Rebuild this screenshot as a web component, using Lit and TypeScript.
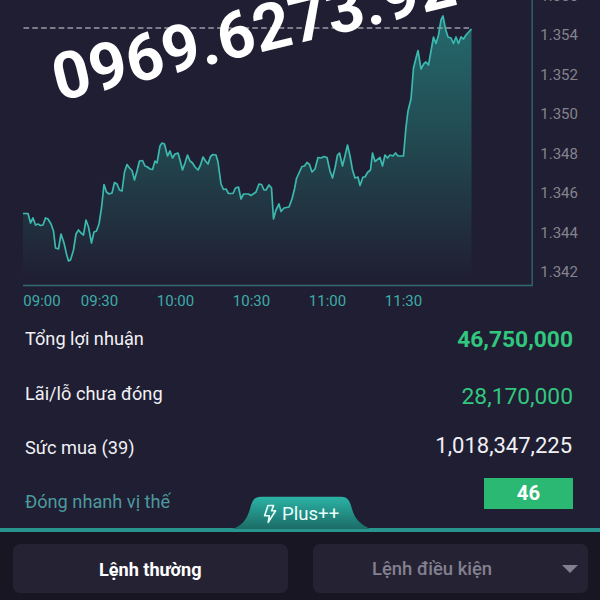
import { LitElement, html, css } from 'lit';
import { customElement, property } from 'lit/decorators.js';

// plot coordinates, origin at the top left of the plot area
const points: number[][] = [
  [0, 213.5], [5, 213.5], [7.5, 223], [10, 218], [12.5, 225], [15, 224], [17.5, 225.5], [20, 225],
  [22.5, 218], [25, 219], [28, 224], [30.5, 231], [32.5, 248], [35.5, 249], [38, 234], [41, 243],
  [43.5, 254], [45.5, 261], [47.5, 260], [50.5, 250], [53, 234], [55.5, 230], [58, 233], [60.5, 235],
  [63, 220], [65.5, 227], [68.5, 243], [71, 232], [73.5, 231], [76, 224], [78.5, 208], [81, 184.5],
  [83.5, 192], [86, 194], [89, 193], [91.5, 182.5], [94, 184], [96.5, 190], [99, 191], [101.5, 172],
  [104, 164.5], [106.5, 168], [109, 170.5], [111.5, 180], [114, 171], [116.5, 161], [119.5, 160.5],
  [122, 166], [124.5, 167], [127, 169], [129.5, 169.5], [132, 161], [134, 163], [137, 146], [139, 143],
  [141.5, 144], [144.5, 156], [147, 151], [149.5, 158], [152, 154], [155, 153], [157, 160], [159.5, 170],
  [162, 163], [164.5, 155], [167, 161], [169.5, 163], [172, 167], [175, 170], [177.5, 165], [180, 157],
  [182.5, 161], [185, 164], [187.5, 156.5], [190, 154.5], [193, 155], [195, 162], [198, 184], [200.5, 189.5],
  [203, 189], [205.5, 193.5], [210, 193.5], [212.5, 188], [215.5, 187], [218, 199], [220.5, 194],
  [225.5, 194], [228, 195.5], [233, 192], [236, 184], [238.5, 184.5], [241, 190], [243, 190], [246, 185],
  [248.5, 188], [250.5, 219], [253, 210], [256, 204], [258, 211.5], [261, 208], [266, 207], [269, 199],
  [271.5, 189], [273.5, 178.5], [276, 173], [279, 166.5], [281.5, 166], [284, 162.5], [286.5, 164.5],
  [289, 172], [292, 169], [295, 157.5], [298, 158], [301, 156.5], [304, 157.5], [307, 171], [309.5, 178],
  [312, 168], [314.5, 155], [316.5, 153], [319.5, 166], [322, 156], [324.5, 145], [327, 156],
  [329.5, 170], [332, 178], [335, 177], [337, 185.5], [340, 177], [342, 177], [344.5, 172.5], [347.5, 170],
  [349.5, 153], [352, 161.5], [357, 157.5], [359.5, 166], [362, 155], [364.5, 158], [367, 155],
  [370, 156], [372.5, 153], [375, 156], [380.5, 156], [383, 127], [385, 111], [388, 99], [390.5, 68],
  [393, 58], [395, 50.5], [398, 69], [401, 63.5], [403, 62], [405.5, 65], [408, 51], [410.5, 37],
  [413, 43.5], [415.5, 35], [418, 20], [420, 16], [422.5, 29], [425, 37], [428, 38], [430.5, 43.5],
  [433, 37], [435.5, 43.5], [438, 37], [440.5, 39], [443, 35], [448.5, 29],
];

@customElement('price-chart')
export class PriceChart extends LitElement {
  static styles = css`
    :host {
      display: block;
      height: 311px;
      overflow: hidden;
    }

    .plot-row {
      display: flex;
      height: 286px;
      padding-left: 23.3px;
    }

    .plot {
      display: block;
      flex: none;
      width: 510px;
      height: 287px;
      margin-right: 7px;
    }

    .prices {
      margin-top: -23px;
      color: #85838e;
      font-size: 15px;
    }

    .price {
      height: 39.45px;
      line-height: 39.45px;
    }

    .times {
      display: flex;
      padding: 5px 0 0 23.3px;
      color: #3cada9;
      font-size: 15px;
      line-height: 20px;
    }

    .time {
      width: 76px;
    }

    .time:first-child {
      width: 57.5px;
    }
  `;

  render() {
    const prices = ['1.356', '1.354', '1.352', '1.350', '1.348', '1.346', '1.344', '1.342'];
    const times = ['09:00', '09:30', '10:00', '10:30', '11:00', '11:30'];
    const line = 'M' + points.map(p => p.join(' ')).join('L');

    return html`
      <div class="plot-row">
        <svg class="plot" viewBox="0 0 510 287">
          <defs>
            <linearGradient id="fill" gradientUnits="userSpaceOnUse" x1="0" y1="16" x2="0" y2="280">
              <stop offset="0" stop-color="#246a6e"></stop>
              <stop offset="0.5" stop-color="#22474f"></stop>
              <stop offset="1" stop-color="#201e32"></stop>
            </linearGradient>
          </defs>
          <path d="${line}V285H0Z" fill="url(#fill)"></path>
          <path d="M0.5 28H448" stroke="#9c9ba6" stroke-width="1.3" stroke-dasharray="5.6 3.2"></path>
          <path d="${line}" fill="none" stroke="#3bb9ae" stroke-width="1.7" stroke-linejoin="round"></path>
          <path d="M0 285.5H509.2V0" fill="none" stroke="#2e6b73" stroke-width="1.3"></path>
        </svg>
        <div class="prices">
          ${prices.map(p => html`<div class="price">${p}</div>`)}
        </div>
      </div>
      <div class="times">
        ${times.map(t => html`<div class="time">${t}</div>`)}
      </div>
    `;
  }
}

@customElement('summary-row')
export class SummaryRow extends LitElement {
  @property() label = '';
  @property({ reflect: true }) kind = '';

  static styles = css`
    :host {
      display: flex;
      justify-content: space-between;
      align-items: center;
      height: 54.4px;
      padding: 0 27px 0 25px;
      color: #f1f1f5;
      font-size: 18.2px;
    }

    .value {
      font-size: 22px;
    }

    :host([kind='total']) .value {
      margin-top: 2px;
      color: #31c77f;
      font-size: 22.8px;
      font-weight: 700;
    }

    :host([kind='open']) .label {
      margin-top: 1px;
    }

    :host([kind='open']) .value {
      margin-top: 8px;
      color: #31c77f;
      font-size: 22.8px;
    }

    :host([kind='power']) .label {
      margin-top: 1px;
    }

    :host([kind='power']) .value {
      margin: 0 1px 3px 0;
    }

    :host([kind='close']) .label {
      color: #4c9a9f;
    }

    :host([kind='close']) .value {
      width: 89px;
      margin-bottom: 16px;
      background: #2bb872;
      color: #fff;
      font-size: 20.3px;
      font-weight: 700;
      line-height: 31px;
      text-align: center;
    }
  `;

  render() {
    return html`
      <span class="label">${this.label}</span>
      <span class="value"><slot></slot></span>
    `;
  }
}

@customElement('order-bar')
export class OrderBar extends LitElement {
  static styles = css`
    :host {
      display: block;
      position: relative;
      box-sizing: border-box;
      height: 72px;
      padding: 12px 12px 8px 12.5px;
      border-top: 4px solid #27958e;
      background: #171622;
    }

    .buttons {
      display: grid;
      grid-template-columns: 275.5px 275.5px;
      justify-content: space-between;
    }

    .button {
      display: flex;
      align-items: center;
      justify-content: center;
      box-sizing: border-box;
      height: 49px;
      padding: 1px 0 0;
      border: 0;
      border-radius: 7px;
      background: #252333;
      color: #fff;
      font: 700 18.1px Roboto, sans-serif;
    }

    .conditional {
      justify-content: space-between;
      padding: 1px 10px 0 59.5px;
      color: #83808f;
      font-size: 18.45px;
      font-weight: 500;
    }

    .tab {
      position: absolute;
      top: -36px;
      left: 232px;
      width: 138px;
      height: 33px;
    }

    .tab-shape {
      position: absolute;
      inset: 0;
    }

    .tab-label {
      position: relative;
      display: flex;
      align-items: center;
      gap: 5px;
      height: 35px;
      padding-left: 31px;
      color: #e8fffb;
      font-size: 18.6px;
    }
  `;

  render() {
    return html`
      <div class="tab">
        <svg class="tab-shape" width="138" height="33" viewBox="0 0 138 33">
          <defs>
            <linearGradient id="tab" x1="0" y1="0" x2="0" y2="1">
              <stop offset="0" stop-color="#2bb3a5"></stop>
              <stop offset="1" stop-color="#1b6c67"></stop>
            </linearGradient>
          </defs>
          <path d="M0 33C10 30 15 23 18 13C20 5 22 .7 29 .7H109C116 .7 118 5 120 13C123 23 128 28 138 33Z" fill="url(#tab)"></path>
        </svg>
        <div class="tab-label">
          <svg width="14" height="20" viewBox="0 0 14 20" fill="none" stroke="#e8fffb" stroke-width="1.6" stroke-linejoin="round">
            <path d="M5 1.5H10.6L8.6 6.8H12.6L5.2 18.4L6.3 11.8H1.6Z"></path>
          </svg>
          <span>Plus++</span>
        </div>
      </div>
      <div class="buttons">
        <button class="button">Lệnh thường</button>
        <button class="button conditional">
          <span>Lệnh điều kiện</span>
          <svg width="16" height="8" viewBox="0 0 16 8"><path d="M0 0H16L8 8Z" fill="#83808f"></path></svg>
        </button>
      </div>
    `;
  }
}

@customElement('app-root')
export class AppRoot extends LitElement {
  static styles = css`
    :host {
      display: flex;
      flex-direction: column;
      position: relative;
      width: 600px;
      height: 600px;
      overflow: hidden;
      background: #201e32;
      font-family: Roboto, sans-serif;
    }

    .summary {
      flex: 1;
      min-height: 0;
    }

    .phone {
      position: absolute;
      left: 61px;
      top: 46px;
      color: #fff;
      font: 700 65.3px/1 Roboto, sans-serif;
      white-space: nowrap;
      transform: rotate(-13.6deg);
      transform-origin: 0 100%;
    }
  `;

  render() {
    return html`
      <price-chart></price-chart>
      <div class="summary">
        <summary-row kind="total" label="Tổng lợi nhuận">46,750,000</summary-row>
        <summary-row kind="open" label="Lãi/lỗ chưa đóng">28,170,000</summary-row>
        <summary-row kind="power" label="Sức mua (39)">1,018,347,225</summary-row>
        <summary-row kind="close" label="Đóng nhanh vị thế">46</summary-row>
      </div>
      <order-bar></order-bar>
      <div class="phone">0969.6273.92</div>
    `;
  }
}
